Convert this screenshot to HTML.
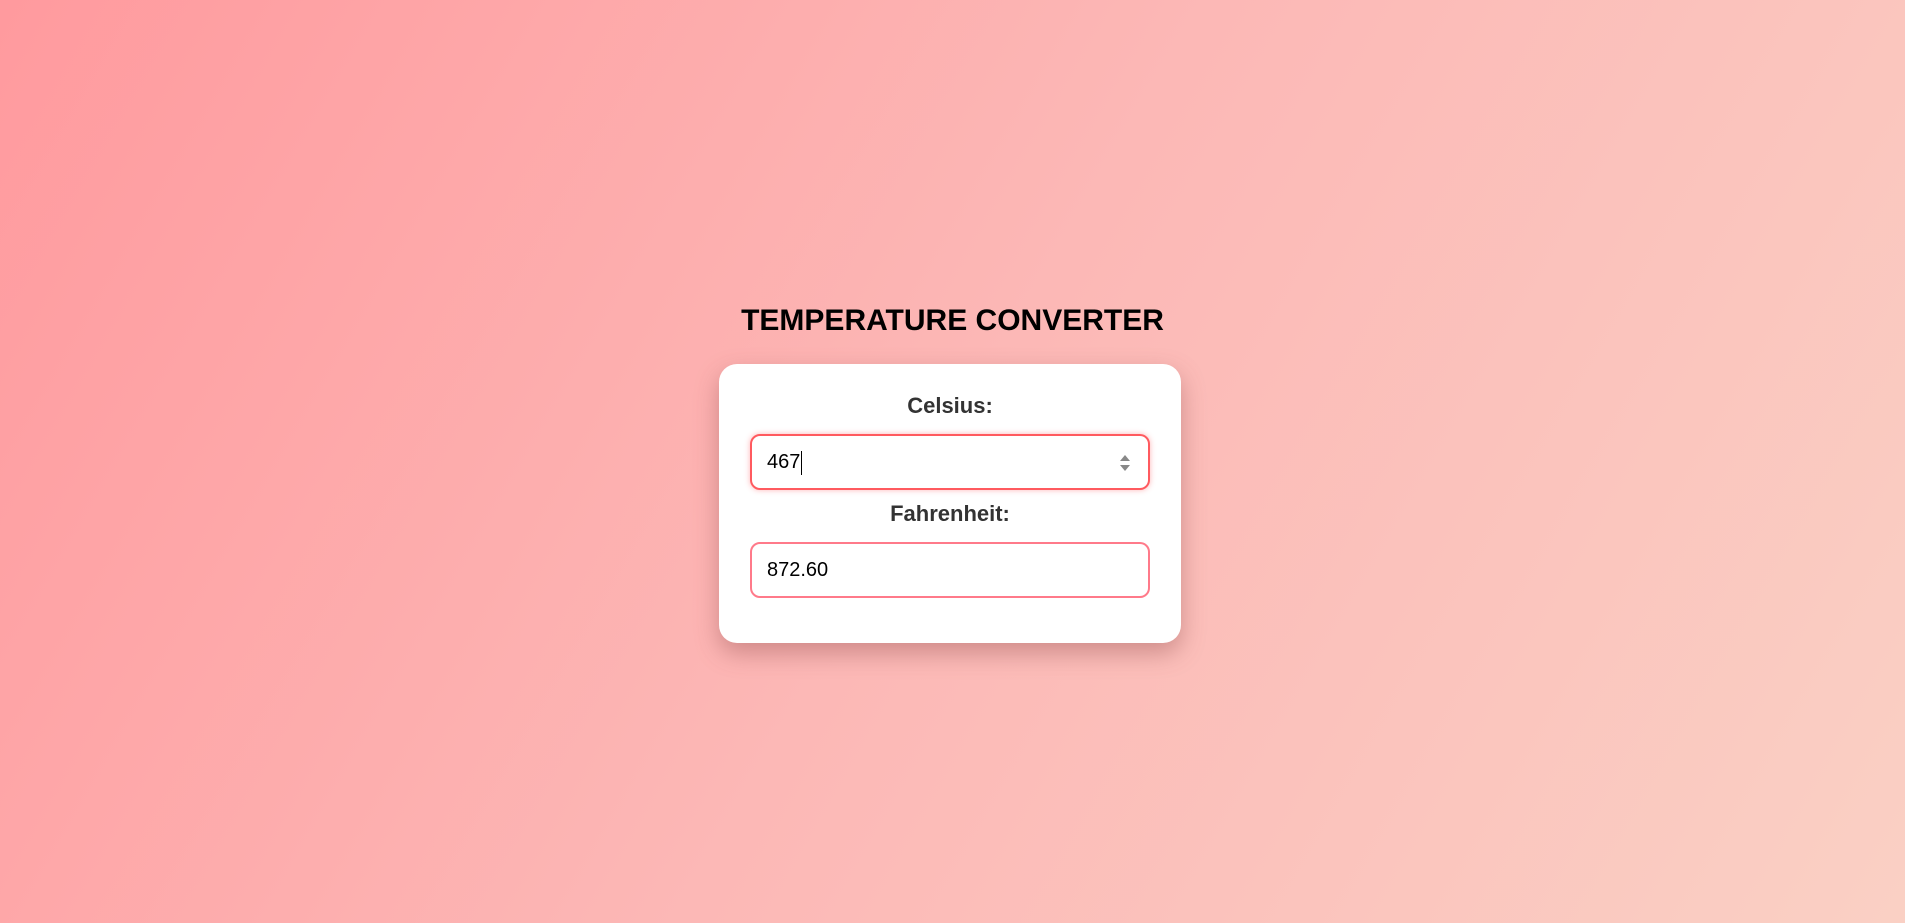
<!DOCTYPE html>
<html><head><meta charset="utf-8"><style>
html,body{margin:0;padding:0;width:1905px;height:923px;overflow:hidden}
body{background:linear-gradient(120deg,#ff9a9e 0%,#fcb8b6 50%,#fad0c4 100%);font-family:"Liberation Sans",Arial,sans-serif;position:relative}
h1{position:absolute;left:0;width:1905px;top:302px;margin:0;text-align:center;font-size:30px;font-weight:bold;color:#000;line-height:38px}
.card{position:absolute;left:719px;top:364px;width:462px;height:279px;background:#fff;border-radius:18px;box-shadow:0 10px 24px rgba(140,70,70,.4)}
label{position:absolute;left:0;width:462px;text-align:center;font-size:22px;font-weight:bold;color:#333}
.inp{position:absolute;left:31px;border:2px solid #ff5a5f;border-radius:10px;font-size:20px;color:#000;padding-left:15px;box-sizing:border-box;width:400px;height:56px;line-height:52px}
.spin{position:absolute;right:16px;top:16px;width:14px;height:22px}
</style></head><body>
<h1>TEMPERATURE CONVERTER</h1>
<div class="card">
<label style="top:29px">Celsius:</label>
<div class="inp" style="top:70px;box-shadow:0 0 6px rgba(255,90,95,.45)">467<span style="display:inline-block;width:1px;height:24px;background:#000;vertical-align:middle;margin-left:1px"></span>
<svg class="spin" viewBox="0 0 14 22"><path d="M2 9L7 3L12 9Z" fill="#888"/><path d="M2 13L7 19L12 13Z" fill="#888"/></svg></div>
<label style="top:137px">Fahrenheit:</label>
<div class="inp" style="top:178px;border-color:#ff7a8a">872.60</div>
</div>
</body></html>
